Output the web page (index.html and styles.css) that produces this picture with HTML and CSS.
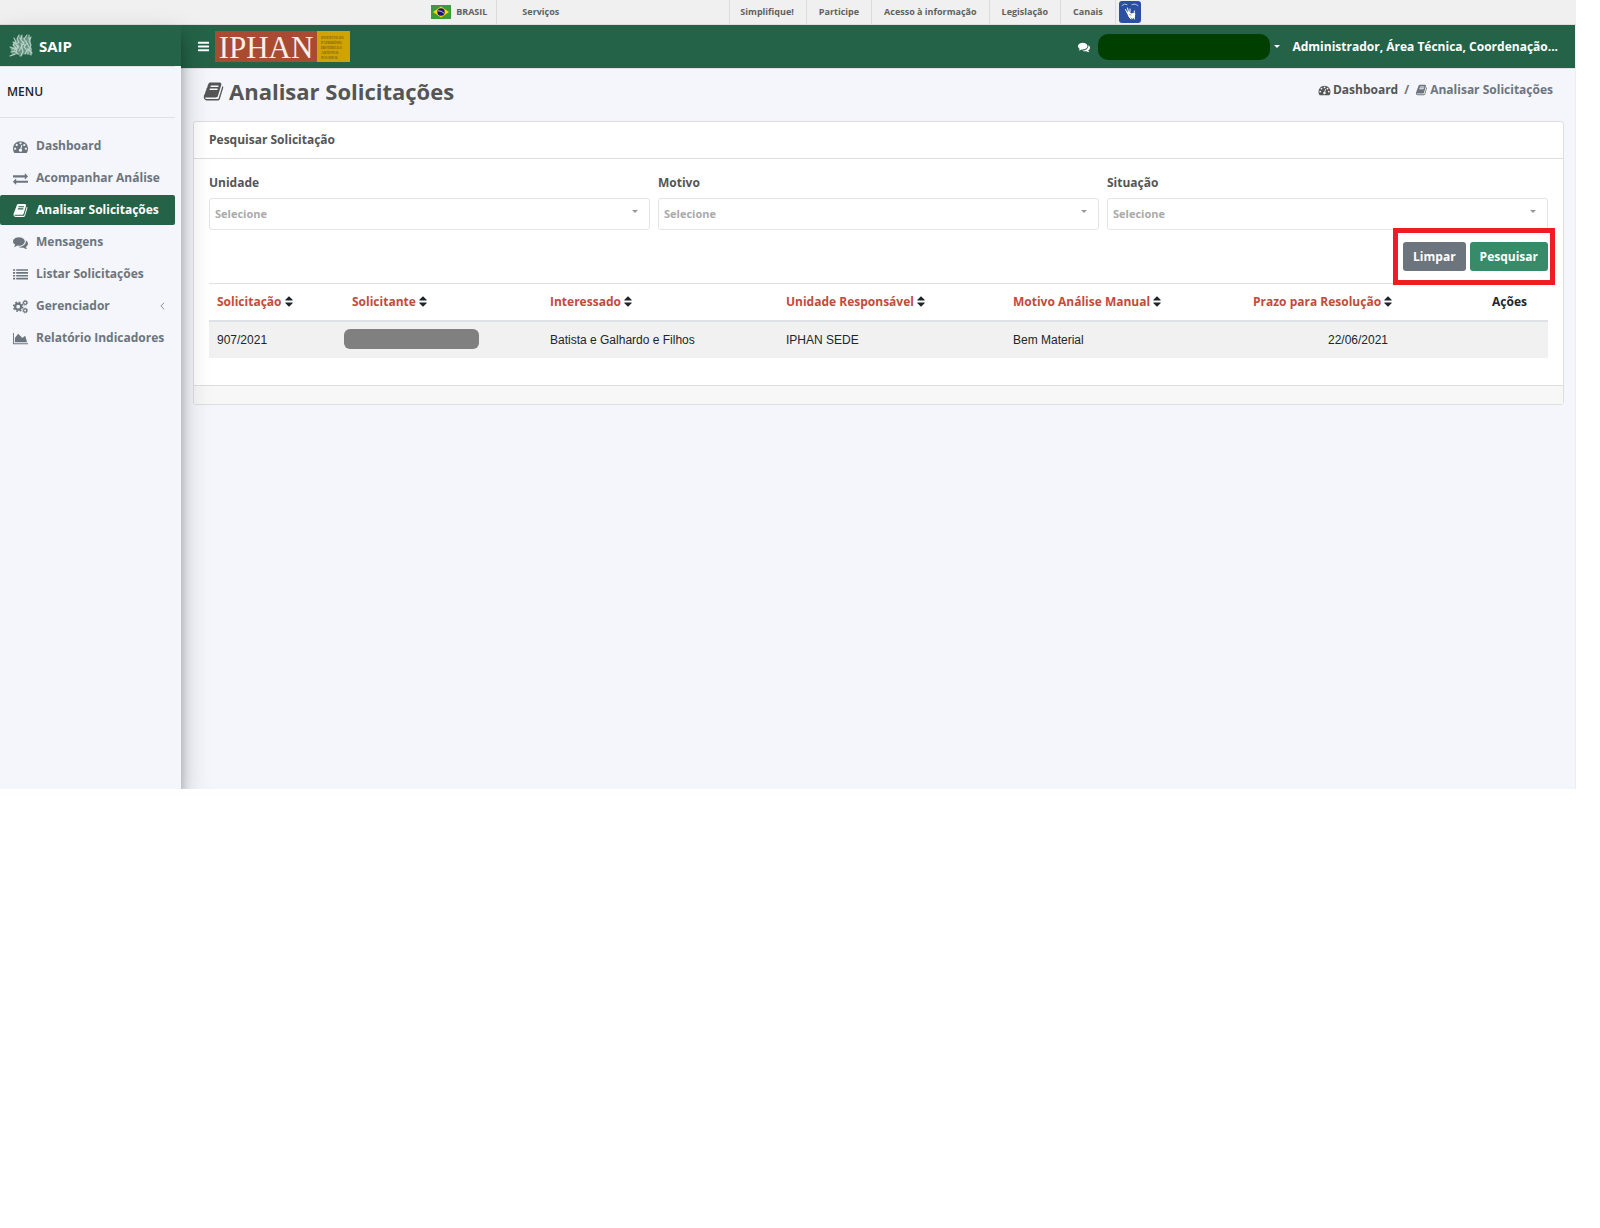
FILE: index.html
```html
<!DOCTYPE html>
<html lang="pt-BR">
<head>
<meta charset="utf-8">
<title>SAIP - Analisar Solicitações</title>
<link rel="stylesheet" href="styles.css">
</head>
<body>
<svg class="sprite" aria-hidden="true">
  <symbol id="i-bars" viewBox="0 0 1792 1792"><path d="M1664 1344v128q0 26-19 45t-45 19h-1408q-26 0-45-19t-19-45v-128q0-26 19-45t45-19h1408q26 0 45 19t19 45zm0-512v128q0 26-19 45t-45 19h-1408q-26 0-45-19t-19-45v-128q0-26 19-45t45-19h1408q26 0 45 19t19 45zm0-512v128q0 26-19 45t-45 19h-1408q-26 0-45-19t-19-45v-128q0-26 19-45t45-19h1408q26 0 45 19t19 45z"/></symbol>
  <symbol id="i-dash" viewBox="0 0 1792 1792"><path d="M384 1152q0-53-37.5-90.5t-90.5-37.5-90.5 37.5-37.5 90.5 37.5 90.5 90.5 37.5 90.5-37.5 37.5-90.5zm192-448q0-53-37.5-90.5t-90.5-37.5-90.5 37.5-37.5 90.5 37.5 90.5 90.5 37.5 90.5-37.5 37.5-90.5zm428 481l101-382q6-26-7.5-48.5t-38.5-29.5-48 6.5-30 39.5l-101 382q-60 5-107 43.5t-63 98.5q-20 77 20 146t117 89 146-20 89-117q16-60-6-117t-72-91zm660-33q0-53-37.5-90.5t-90.5-37.5-90.5 37.5-37.5 90.5 37.5 90.5 90.5 37.5 90.5-37.5 37.5-90.5zm-640-640q0-53-37.5-90.5t-90.5-37.5-90.5 37.5-37.5 90.5 37.5 90.5 90.5 37.5 90.5-37.5 37.5-90.5zm448 192q0-53-37.5-90.5t-90.5-37.5-90.5 37.5-37.5 90.5 37.5 90.5 90.5 37.5 90.5-37.5 37.5-90.5zm320 448q0 261-141 483-19 29-54 29h-1402q-35 0-54-29-141-221-141-483 0-182 71-348t191-286 286-191 348-71 348 71 286 191 191 286 71 348z"/></symbol>
  <symbol id="i-exchange" viewBox="0 0 1792 1792"><path d="M1792 1184v192q0 13-9.5 22.5t-22.5 9.5h-1376v192q0 13-9.5 22.5t-22.5 9.5q-12 0-24-10l-319-320q-9-9-9-22 0-14 9-23l320-320q9-9 23-9 13 0 22.5 9.5t9.5 22.5v192h1376q13 0 22.5 9.5t9.5 22.5zm0-544q0 14-9 23l-320 320q-9 9-23 9-13 0-22.5-9.5t-9.5-22.5v-192h-1376q-13 0-22.5-9.5t-9.5-22.5v-192q0-13 9.5-22.5t22.5-9.5h1376v-192q0-14 9-23t23-9q12 0 24 10l319 319q9 9 9 23z"/></symbol>
  <symbol id="i-book" viewBox="0 0 1792 1792"><path d="M1703 478q40 57 18 129l-275 906q-19 64-76.5 107.5t-122.5 43.5h-923q-77 0-148.5-53.5t-99.5-131.5q-24-67-2-127 0-4 3-27t4-37q1-8-3-21.5t-3-19.5q2-11 8-21t16.5-23.5 16.5-23.5q23-38 45-91.5t30-91.5q3-10 .5-30t-.5-28q3-11 17-28t17-23q21-36 42-92t25-90q1-9-2.5-32t.5-28q4-13 22-30.5t22-22.5q19-26 42.5-84.5t27.5-96.5q1-8-3-25.5t-2-26.5q2-8 9-18t18-23 17-21q8-12 16.5-30.5t15-35 16-36 19.5-32 26.5-23.5 36-11.5 47.5 5.5l-1 3q38-9 51-9h761q74 0 114 56t18 130l-274 906q-36 119-71.5 153.5t-128.5 34.5h-869q-27 0-38 15-11 16-1 43 24 70 144 70h923q29 0 56-15.5t35-41.5l300-987q7-22 5-57 38 15 59 43zm-1064 2q-4 13 2 22.5t20 9.5h608q13 0 25.5-9.5t16.5-22.5l21-64q4-13-2-22.5t-20-9.5h-608q-13 0-25.5 9.5t-16.5 22.5zm-83 256q-4 13 2 22.5t20 9.5h608q13 0 25.5-9.5t16.5-22.5l21-64q4-13-2-22.5t-20-9.5h-608q-13 0-25.5 9.5t-16.5 22.5z"/></symbol>
  <symbol id="i-comments" viewBox="0 0 1792 1792"><path d="M1408 768q0 139-94 257t-256.5 186.5-353.5 68.5q-86 0-176-16-124 88-278 128-36 9-86 16h-3q-11 0-20.5-8t-11.5-21q-1-3-1-6.5t.5-6.5 2-6l2.5-5 3.5-5.5 4-5 4.5-5 4-4.5q5-6 23-25t26-29.5 22.5-29 25-38.5 20.5-44q-124-72-195-177t-71-224q0-139 94-257t256.5-186.5 353.5-68.5 353.5 68.5 256.5 186.5 94 257zm384 256q0 120-71 224.5t-195 176.5q10 24 20.5 44t25 38.5 22.5 29 26 29.5 23 25q1 1 4 4.5t4.5 5 4 5 3.5 5.5l2.5 5 2 6 .5 6.5-1 6.5q-3 14-13 22t-22 7q-50-7-86-16-154-40-278-128-90 16-176 16-271 0-472-132 58 4 88 4 161 0 309-45t264-129q125-92 192-212t67-254q0-77-23-152 129 71 204 178t75 230z"/></symbol>
  <symbol id="i-list" viewBox="0 0 1792 1792"><path d="M0 256h256v200H0zM384 256h1408v200H384zM0 600h256v200H0zM384 600h1408v200H384zM0 944h256v200H0zM384 944h1408v200H384zM0 1288h256v200H0zM384 1288h1408v200H384z"/></symbol>
  <symbol id="i-cogs" viewBox="0 0 16 16"><g fill="none" stroke="currentColor"><circle cx="5.5" cy="8.2" r="3.2" stroke-width="2.4"/><circle cx="5.5" cy="8.2" r="4.9" stroke-width="1.6" stroke-dasharray="1.92 1.93"/><circle cx="13" cy="4" r="1.7" stroke-width="1.3"/><circle cx="13" cy="4" r="2.6" stroke-width=".9" stroke-dasharray="1.1 .94"/><circle cx="13" cy="12.3" r="1.7" stroke-width="1.3"/><circle cx="13" cy="12.3" r="2.6" stroke-width=".9" stroke-dasharray="1.1 .94"/></g></symbol>
  <symbol id="i-area" viewBox="0 0 2048 1792"><path d="M2048 1536v128H0V128h128v1408zm-384-1024l256 896H256V832l448-576 576 576z"/></symbol>
  <symbol id="i-sort" viewBox="0 0 1024 1792"><path d="M1024 1088q0 26-19 45l-448 448q-19 19-45 19t-45-19l-448-448q-19-19-19-45t19-45 45-19h896q26 0 45 19t19 45zm0-384q0 26-19 45t-45 19H64q-26 0-45-19T0 704t19-45l448-448q19-19 45-19t45 19l448 448q19 19 19 45z"/></symbol>
  <symbol id="i-angle" viewBox="0 0 6 10"><path d="M5 1 1 5l4 4" fill="none" stroke="currentColor"/></symbol>
</svg>

<div class="app">
  <div class="gov">
    <nav class="gov-inner" aria-label="Governo">
      <a class="gov-brasil" href="#">
        <svg class="flag" viewBox="0 0 20 14" aria-hidden="true"><rect width="20" height="14" fill="#3b9b3d"/><path d="M10 1.6 18 7l-8 5.400L2 7z" fill="#ffd800"/><circle cx="10" cy="7" r="3.700" fill="#1b1475"/><path d="M7 5.800q3.500-.3 6 2.400" stroke="#cfd6ee" fill="none" stroke-width=".9"/></svg>
        BRASIL</a>
      <a class="gov-services" href="#">Serviços</a>
      <a class="gov-first" href="#">Simplifique!</a>
      <a href="#">Participe</a>
      <a href="#">Acesso à informação</a>
      <a href="#">Legislação</a>
      <a href="#">Canais</a>
      <button class="libras" aria-label="Libras"><svg viewBox="0 0 22 22"><rect width="22" height="22" rx="3" fill="#2a4fa3"/><g fill="none" stroke="#fff" stroke-linecap="round"><path d="M3 4.500Q5 2 8 3.500M13 3.500q3-1.500 6 1" stroke-width=".8" opacity=".8"/><path d="M8.500 12 6.500 8.500M9.500 11 8.500 7M11 11V8" stroke-width="1"/><path d="m15 12 .5-2M15 16l.5 2M10 16l2 2M13 13l3 0" stroke-width="1"/></g><path d="m7.500 11 3-.5 1.500 2 4-.5v4l-2.500 2-4-2.500z" fill="#fff"/><path d="m10.500 13 1.500 1.500" stroke="#2a4fa3" stroke-width=".8"/></svg></button>
    </nav>
  </div>

  <div class="layout">
    <aside class="sidebar">
      <a class="brand" href="#">
        <svg class="emblem" viewBox="0 0 24 24" aria-hidden="true"><path d="M10 2 8 6l-4 2 1 4-3 4 1 6 6-2 2 3 4-3 7 1V4l-4-2-3 2-3-3z" fill="#b9d2c8" opacity=".45"/><g fill="none" stroke="#b9d2c8" stroke-linecap="round" stroke-width="1.100"><path d="M10 1 8 5l2 3-3 2 2 4-4 2M13 1l-1 5 3 3-3 4 2 4-2 5M18 1l-3 4 3 4-3 4 3 3-2 4M22 3l-2 4 2 4-2 5 3 3M5 4l2 4-3 3 3 3-5 1M2 18l4-1 3 3M1 22l5-2M9 11l-2 8M11 4l5 8M20 1v4M17 7l3 6M4 8l6 5M10 17l5-9M19 14v6M22 14v7M1 13l3 1M12 9l2 9"/></g></svg>
        SAIP</a>
      <h2 class="menu-title">MENU</h2>
      <ul class="menu">
        <li><a href="#"><svg class="ico"><use href="#i-dash"/></svg>Dashboard</a></li>
        <li><a href="#"><svg class="ico"><use href="#i-exchange"/></svg>Acompanhar Análise</a></li>
        <li><a href="#" class="active"><svg class="ico"><use href="#i-book"/></svg>Analisar Solicitações</a></li>
        <li><a href="#"><svg class="ico"><use href="#i-comments"/></svg>Mensagens</a></li>
        <li><a href="#"><svg class="ico"><use href="#i-list"/></svg>Listar Solicitações</a></li>
        <li><a href="#"><svg class="ico"><use href="#i-cogs"/></svg>Gerenciador<svg class="angle"><use href="#i-angle"/></svg></a></li>
        <li><a href="#"><svg class="ico"><use href="#i-area"/></svg>Relatório Indicadores</a></li>
      </ul>
    </aside>

    <div class="main">
      <header class="navbar">
        <button class="toggle" aria-label="Menu"><svg><use href="#i-bars"/></svg></button>
        <a class="logo" href="#"><span class="logo-name">IPHAN</span><span class="logo-sub">Instituto do<br>Patrimônio<br>Histórico e<br>Artístico<br>Nacional</span></a>
        <a class="messages" href="#" aria-label="Mensagens"><svg><use href="#i-comments"/></svg></a>
        <button class="user" aria-label="Usuário"><span class="user-name"></span><span class="caret"></span></button>
        <span class="roles">Administrador, Área Técnica, Coordenação...</span>
      </header>

      <div class="page-head">
        <h1><svg><use href="#i-book"/></svg>Analisar Solicitações</h1>
        <nav class="crumbs" aria-label="Trilha"><a href="#"><svg><use href="#i-dash"/></svg>Dashboard</a><span class="slash">/</span><span class="current"><svg><use href="#i-book"/></svg>Analisar Solicitações</span></nav>
      </div>

      <section class="card">
        <h2 class="card-head">Pesquisar Solicitação</h2>
        <div class="card-body">
          <form class="filters">
            <div class="field"><label for="unidade">Unidade</label><div class="select"><select id="unidade"><option>Selecione</option></select></div></div>
            <div class="field"><label for="motivo">Motivo</label><div class="select"><select id="motivo"><option>Selecione</option></select></div></div>
            <div class="field"><label for="situacao">Situação</label><div class="select"><select id="situacao"><option>Selecione</option></select></div></div>
            <div class="actions"><button type="reset" class="btn">Limpar</button><button type="button" class="btn primary">Pesquisar</button></div>
          </form>
          <table>
            <colgroup><col class="c1"><col class="c2"><col class="c3"><col class="c4"><col class="c5"><col class="c6"><col class="c7"></colgroup>
            <thead><tr>
              <th><a href="#">Solicitação</a><svg><use href="#i-sort"/></svg></th>
              <th><a href="#">Solicitante</a><svg><use href="#i-sort"/></svg></th>
              <th><a href="#">Interessado</a><svg><use href="#i-sort"/></svg></th>
              <th><a href="#">Unidade Responsável</a><svg><use href="#i-sort"/></svg></th>
              <th><a href="#">Motivo Análise Manual</a><svg><use href="#i-sort"/></svg></th>
              <th><a href="#">Prazo para Resolução</a><svg><use href="#i-sort"/></svg></th>
              <th class="center">Ações</th>
            </tr></thead>
            <tbody><tr>
              <td>907/2021</td>
              <td class="hidden-name"><span class="redacted"></span></td>
              <td>Batista e Galhardo e Filhos</td>
              <td>IPHAN SEDE</td>
              <td>Bem Material</td>
              <td class="center">22/06/2021</td>
              <td></td>
            </tr></tbody>
          </table>
        </div>
        <div class="card-foot"></div>
      </section>
    </div>
  </div>
</div>
</body>
</html>
```

FILE: styles.css
```css
* { box-sizing: border-box; }
body {
  margin: 0;
  background: #fff;
  color: #212529;
  font: 700 12px/20px "Open Sans", sans-serif;
}
a { color: inherit; text-decoration: none; }
button { border: 0; background: none; padding: 0; font: inherit; color: inherit; }
svg { display: block; fill: currentColor; flex: none; }
h1, h2, ul { margin: 0; padding: 0; }
.sprite { display: none; }

.app {
  display: flex;
  flex-direction: column;
  min-height: 789px;
  margin-right: 24px;
  overflow: hidden;
}

/* Government bar */
.gov {
  height: 25px;
  background: #f0f0f0;
  border-bottom: 1px solid #dedede;
  color: #606060;
  font-size: 9px;
  line-height: 24px;
}
.gov-inner { display: flex; justify-content: center; }
.gov-inner a { padding: 0 12px; border-right: 1px solid #dcdcdc; white-space: nowrap; }
.gov-inner .gov-brasil { display: flex; align-items: center; gap: 5px; padding: 0 9px 0 0; }
.gov-inner .gov-services { width: 233px; padding: 0 25px; }
.gov-inner .gov-first { padding-left: 10px; }
.flag { width: 20px; height: 14px; }
.libras { margin: 1px 4px 1px 3px; }
.libras svg { width: 22px; height: 22px; }

.layout { display: flex; flex: 1; }

/* Sidebar */
.sidebar {
  position: relative;
  z-index: 1;
  flex: none;
  width: 181px;
  background: #f4f6fb;
  box-shadow: 0 14px 28px rgba(0, 0, 0, .25), 0 10px 10px rgba(0, 0, 0, .22);
}
.brand {
  display: flex;
  align-items: center;
  gap: 6px;
  height: 41px;
  padding-left: 9px;
  background: #246348;
  color: #fff;
  font-size: 15px;
}
.emblem { width: 24px; height: 24px; }
.menu-title {
  margin-right: 6px;
  padding: 15px 7px;
  border-top: 1px solid #dee2e6;
  border-bottom: 1px solid #dee2e6;
  font-size: 12px;
  font-weight: 600;
}
.menu { display: flex; flex-direction: column; gap: 2px; margin: 13px 6px 0 0; list-style: none; }
.menu a {
  display: flex;
  align-items: center;
  gap: 8px;
  height: 30px;
  padding-left: 13px;
  border-radius: 2px;
  color: #6c757d;
  white-space: nowrap;
}
.menu .active { background: #246348; color: #fff; }
.ico { width: 15px; height: 15px; }
.angle { width: 5px; height: 8px; margin: 0 10px 0 auto; }

/* Main column */
.main { flex: 1; min-width: 0; background: #f4f6fb; border-right: 1px solid #eceef2; }
.navbar {
  display: flex;
  align-items: center;
  height: 44px;
  padding: 0 17px 0 16px;
  background: #246348;
  border-bottom: 1px solid #dee2e6;
  color: #fff;
}
.toggle svg { width: 13px; height: 13px; }
.logo { display: flex; margin-left: 5px; }
.logo-name {
  width: 102px;
  height: 31px;
  background: #a94a32;
  color: #fbeee8;
  font: 400 31px/34px "Liberation Serif", serif;
  text-align: center;
}
.logo-sub {
  width: 33px;
  padding: 4px 0 2px 4px;
  background: #d1a203;
  color: #7d6410;
  font: 700 4px/5px "Liberation Serif", serif;
  font-variant: small-caps;
  white-space: nowrap;
}
.messages { margin-left: auto; }
.messages svg { width: 12px; height: 12px; }
.user { display: flex; align-items: center; gap: 4px; margin: 0 12px 0 8px; }
.user-name { width: 172px; height: 26px; border-radius: 10px; background: #003f00; }
.caret { border: 3px solid transparent; border-top-color: currentColor; border-bottom: 0; }

.page-head {
  display: flex;
  justify-content: space-between;
  padding: 7px 22px 14px;
  color: #555;
}
h1 { display: flex; align-items: center; gap: 5px; font-size: 22px; font-weight: 700; line-height: 31px; }
h1 svg { width: 21px; height: 21px; }
.crumbs { display: flex; height: 27px; align-items: center; }
.crumbs a, .current { display: flex; align-items: center; gap: 2px; }
.crumbs svg { width: 13px; height: 12px; }
.slash { padding: 0 6px; color: #6c757d; }
.current { color: #6c757d; }

/* Search card */
.card {
  margin: 0 11px 0 12px;
  border: 1px solid #dcdee0;
  border-radius: 3px;
  background: #fff;
}
.card-head {
  padding: 8px 15px;
  border-bottom: 1px solid #dcdee0;
  color: #555;
  font-size: 12px;
}
.card-body { padding: 14px 15px 27px; }
.filters { display: grid; grid-template-columns: repeat(3, 1fr); column-gap: 8px; }
.field label { display: block; margin-bottom: 5px; color: #555; }
.select { display: grid; align-items: center; }
.select::after {
  content: "";
  grid-area: 1 / 1;
  justify-self: end;
  margin: 0 12px 5px 0;
  border: 3px solid transparent;
  border-top-color: #999;
  border-bottom: 0;
}
.select select {
  grid-area: 1 / 1;
  appearance: none;
  width: 100%;
  height: 32px;
  padding: 0 5px 2px;
  border: 1px solid #e4e5e7;
  border-radius: 3px;
  background: #fff;
  color: #aaa;
  font: 700 11px "Open Sans", sans-serif;
}
.actions {
  grid-column: 3;
  justify-self: end;
  display: flex;
  gap: 4px;
  margin: -2px -7px -2px 0;
  padding: 9px 2px 9px 5px;
  border: 5px solid #ee1c25;
  z-index: 1;
}
.btn { height: 29px; padding: 0 10px; border-radius: 3px; background: #6c757d; color: #fff; }
.primary { background: #378b68; }

table { width: 100%; table-layout: fixed; border-collapse: collapse; border-top: 1px solid #dee2e6; }
.c1 { width: 135px; }
.c2 { width: 198px; }
.c3 { width: 236px; }
.c4 { width: 227px; }
.c5 { width: 240px; }
.c6 { width: 226px; }
.c7 { width: 77px; }
th { height: 37px; padding: 0 8px; border-bottom: 2px solid #dee2e6; text-align: left; white-space: nowrap; }
th a { color: #c34a3c; }
th svg { display: inline-block; width: 8px; height: 13px; margin-left: 3px; vertical-align: -2px; }
td { height: 37px; padding: 0 8px; background: #f1f1f1; font: 400 12px/20px "Liberation Sans", sans-serif; }
.center { text-align: center; }
.hidden-name { padding: 0 0 2px; }
.redacted { display: block; width: 135px; height: 20px; border-radius: 6px; background: #808080; }
.card-foot { height: 19px; border-top: 1px solid #dcdee0; background: #f7f7f7; }
```
